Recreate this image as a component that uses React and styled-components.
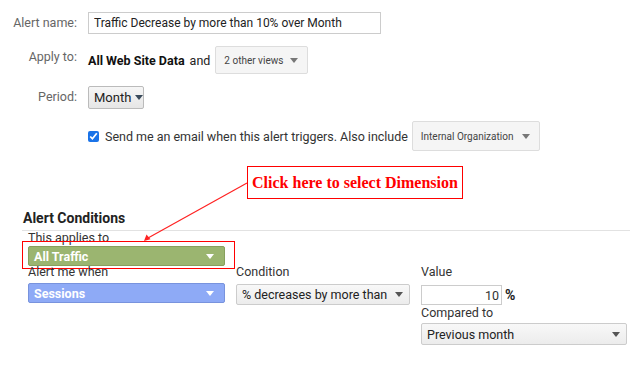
import React from 'react';
import styled, { createGlobalStyle } from 'styled-components';

const GlobalStyle = createGlobalStyle`
  html, body {
    margin: 0;
    padding: 0;
    background: #fff;
  }
  body {
    font-family: Roboto, "Noto Sans", Arial, sans-serif;
    font-size: 12.5px;
    color: #222;
  }
`;

const CaretIcon = styled.svg`
  flex-shrink: 0;
`;

const Caret = ({ color = '#555' }) => (
  <CaretIcon width="8" height="5" viewBox="0 0 8 5">
    <path d="M0 0h8L4 5z" fill={color} />
  </CaretIcon>
);

const App = () => (
  <Page>
    <GlobalStyle />
    <Form>
      <Label>Alert name:</Label>
      <NameInput defaultValue="Traffic Decrease by more than 10% over Month" />

      <Label>Apply to:</Label>
      <Inline>
        <b>All Web Site Data</b>
        <span>and</span>
        <GreyMenu $w="93px" $h="28px">
          2 other views
          <Caret color="#777" />
        </GreyMenu>
      </Inline>

      <Label>Period:</Label>
      <Inline>
        <PeriodButton>
          Month
          <Caret color="#3a4a5a" />
        </PeriodButton>
      </Inline>

      <span />
      <Inline $gap="5px">
        <Check type="checkbox" defaultChecked />
        <EmailText>Send me an email when this alert triggers. Also include</EmailText>
        <GreyMenu $w="128px" $h="30px">
          Internal Organization
          <Caret color="#777" />
        </GreyMenu>
      </Inline>
    </Form>

    <Callout>Click here to select Dimension</Callout>

    <Conditions>
      <SectionTitle>Alert Conditions</SectionTitle>
      <Body>
        <Field>
          <FieldLabel>This applies to</FieldLabel>
          <Highlight>
            <ColourMenu $bg="#9bb570" $border="#87a05d">
              All Traffic
              <Caret color="#fff" />
            </ColourMenu>
          </Highlight>
        </Field>
        <Columns>
          <Field>
            <FieldLabel>Alert me when</FieldLabel>
            <ColourMenu $bg="#8eaaf6" $border="#7893dd" $top="4px">
              Sessions
              <Caret color="#fff" />
            </ColourMenu>
          </Field>
          <Field>
            <FieldLabel>Condition</FieldLabel>
            <PlainMenu $w="174px" $h="21px" $top="5px">
              % decreases by more than
              <Caret color="#555" />
            </PlainMenu>
          </Field>
          <Field>
            <FieldLabel>Value</FieldLabel>
            <ValueRow>
              <ValueInput defaultValue="10" />
              <b>%</b>
            </ValueRow>
            <FieldLabel $top="1px">Compared to</FieldLabel>
            <PlainMenu $w="206px" $h="22px" $top="3px">
              Previous month
              <Caret color="#555" />
            </PlainMenu>
          </Field>
        </Columns>
      </Body>
    </Conditions>

    <Pointer width="630" height="368" viewBox="0 0 630 368">
      <line x1="247" y1="183" x2="148" y2="238" stroke="#f22" strokeWidth="1.2" />
      <path d="M144 241l2.5-6.5 4 4.8z" fill="#f22" />
    </Pointer>
  </Page>
);

const Page = styled.div`
  position: relative;
  width: 630px;
  height: 368px;
  overflow: hidden;
`;

const Form = styled.div`
  display: grid;
  grid-template-columns: 77px auto;
  column-gap: 11px;
  row-gap: 12px;
  padding-top: 12px;
  justify-items: start;
`;

const Label = styled.div`
  justify-self: end;
  color: #666;
  font-size: 12.5px;
  line-height: 15px;
  padding-top: 3px;
`;

const NameInput = styled.input`
  box-sizing: border-box;
  width: 293px;
  height: 22px;
  border: 1px solid #ccc;
  padding: 0 5px;
  font-family: Roboto, Arial, sans-serif;
  font-size: 12px;
  color: #222;
  outline: none;
`;

const Inline = styled.div`
  display: flex;
  align-items: center;
  gap: ${(p) => p.$gap || '5px'};
  font-size: 12.5px;

  b {
    font-weight: 700;
    color: #111;
  }
`;

const GreyMenu = styled.div`
  box-sizing: border-box;
  width: ${(p) => p.$w};
  height: ${(p) => p.$h};
  display: flex;
  align-items: center;
  justify-content: space-between;
  padding: 0 9px 0 8px;
  border: 1px solid #ddd;
  border-radius: 2px;
  background: #f5f5f5;
  color: #444;
  font-size: 10px;
  white-space: nowrap;
`;

const PeriodButton = styled.div`
  box-sizing: border-box;
  height: 23px;
  width: 56px;
  display: flex;
  align-items: center;
  gap: 4px;
  padding: 0 5px;
  border: 1px solid #bbb;
  border-radius: 2px;
  background: linear-gradient(#f6f6f6, #e6e6e6);
  color: #222;
  font-size: 13px;
`;

const Check = styled.input`
  width: 11px;
  height: 11px;
  margin: 0 1px 0 0;
  accent-color: #1a73e8;
`;

const EmailText = styled.span`
  color: #333;
  font-size: 12.5px;
  letter-spacing: -0.02px;
  margin-right: -1px;
`;

const Callout = styled.div`
  box-sizing: border-box;
  margin: 15px 0 0 247px;
  width: 216px;
  height: 33px;
  border: 1px solid #f00;
  display: flex;
  align-items: center;
  justify-content: center;
  font-family: "Liberation Serif", "Times New Roman", serif;
  font-weight: 700;
  font-size: 16px;
  color: #f00;
`;

const Conditions = styled.section`
  margin-top: 11px;
  padding-left: 22px;
`;

const SectionTitle = styled.h3`
  margin: 0;
  padding: 0 1px 3px;
  border-bottom: 1px solid #e2e2e2;
  font-size: 14px;
  font-weight: 700;
  color: #222;
  line-height: 17px;
`;

const Body = styled.div`
  padding-left: 6px;
`;

const Field = styled.div`
  display: flex;
  flex-direction: column;
  align-items: flex-start;
`;

const FieldLabel = styled.div`
  font-size: 12.5px;
  color: #333;
  line-height: 14px;
  margin-top: ${(p) => p.$top || '0'};
`;

const Highlight = styled.div`
  margin: -4px 0 0 -6px;
  padding: 4px 9px 2px 5px;
  border: 1px solid #f00;
`;

const ColourMenu = styled.div`
  box-sizing: border-box;
  width: 197px;
  height: 20px;
  margin-top: ${(p) => p.$top || '0'};
  display: flex;
  align-items: center;
  justify-content: space-between;
  padding: 0 10px 0 5px;
  border: 1px solid ${(p) => p.$border};
  border-radius: 2px;
  background: ${(p) => p.$bg};
  color: #fff;
  font-weight: 700;
  font-size: 12.5px;
`;

const Columns = styled.div`
  display: flex;
  gap: 11px;
  margin-top: -4px;
`;

const PlainMenu = styled.div`
  box-sizing: border-box;
  width: ${(p) => p.$w};
  height: ${(p) => p.$h};
  margin-top: ${(p) => p.$top};
  display: flex;
  align-items: center;
  justify-content: space-between;
  padding: 0 6px 0 5px;
  border: 1px solid #ccc;
  border-radius: 2px;
  background: linear-gradient(#f8f8f8, #ececec);
  color: #222;
  font-size: 12.5px;
`;

const ValueRow = styled.div`
  display: flex;
  align-items: center;
  gap: 3px;
  margin-top: 6px;

  b {
    font-size: 14px;
    font-weight: 700;
  }
`;

const ValueInput = styled.input`
  box-sizing: border-box;
  width: 81px;
  height: 20px;
  border: 1px solid #ccc;
  text-align: right;
  padding: 0 2px;
  font-family: Roboto, Arial, sans-serif;
  font-size: 12.5px;
  color: #333;
  outline: none;
`;

const Pointer = styled.svg`
  position: absolute;
  left: 0;
  top: 0;
  pointer-events: none;
`;

export default App;
